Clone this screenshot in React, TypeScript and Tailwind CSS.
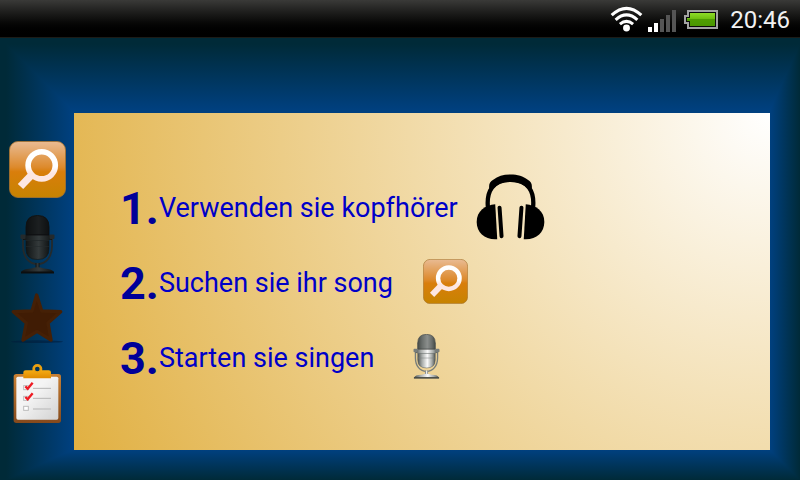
import { useId } from "react";

function WifiIcon() {
  return (
    <svg viewBox="30 19 98 79" className="h-[26px] w-[33px]" fill="none" stroke="#fff" strokeWidth="9.5" aria-hidden="true">
      <path d="M34 47 Q79 5 124 47" />
      <path d="M46 61 Q79 31 112 61" />
      <path d="M59 74 Q79 58 99 74" />
      <circle cx="79" cy="86" r="10.5" fill="#fff" stroke="none" />
    </svg>
  );
}

function SignalIcon() {
  return (
    <svg viewBox="0 0 28 22" className="h-[22px] w-7" aria-hidden="true">
      <rect x="0" y="17" width="4" height="5" fill="#fff" />
      <rect x="6" y="13" width="4" height="9" fill="#fff" />
      <rect x="12" y="9" width="4" height="13" fill="#555" />
      <rect x="18" y="5" width="4" height="17" fill="#555" />
      <rect x="24" y="0" width="4" height="22" fill="#555" />
    </svg>
  );
}

function BatteryIcon() {
  const id = useId();
  return (
    <svg viewBox="0 0 34 19" className="h-[19px] w-[34px]" aria-hidden="true">
      <defs>
        <linearGradient id={id} x1="0" y1="0" x2="0" y2="1">
          <stop offset="0" stopColor="#8fdc28" />
          <stop offset="0.45" stopColor="#6fbf10" />
          <stop offset="0.5" stopColor="#4f9e02" />
          <stop offset="1" stopColor="#4a9600" />
        </linearGradient>
      </defs>
      <path d="M3 0H34V19H3V14H0V5H3Z" fill="#a3a3a3" />
      <path d="M5 2H32V17H5V12H2V7H5Z" fill="#0a0a0a" />
      <path d="M6 3H31V16H6V11H3V8H6Z" fill={`url(#${id})`} />
    </svg>
  );
}

function SearchIcon({ className }: { className: string }) {
  const id = useId();
  return (
    <svg viewBox="0 0 57 57" className={className} aria-hidden="true">
      <defs>
        <linearGradient id={`${id}-tile`} x1="0" y1="0" x2="0" y2="1">
          <stop offset="0" stopColor="#e9bb93" />
          <stop offset="0.46" stopColor="#dd8a2c" />
          <stop offset="0.54" stopColor="#d97e0c" />
          <stop offset="1" stopColor="#c68300" />
        </linearGradient>
        <linearGradient id={`${id}-glass`} gradientUnits="userSpaceOnUse" x1="0" y1="8" x2="0" y2="48">
          <stop offset="0.45" stopColor="#fff" />
          <stop offset="0.6" stopColor="#fde6e2" />
        </linearGradient>
      </defs>
      <rect x="0.5" y="0.5" width="56" height="56" rx="8.5" fill={`url(#${id}-tile)`} stroke="#a87430" strokeWidth="0.8" />
      <g fill="none" stroke={`url(#${id}-glass)`}>
        <path d="M24 32.5 11.5 45.5" strokeWidth="7.5" />
        <circle cx="32.7" cy="24.3" r="13.6" strokeWidth="5.6" />
      </g>
    </svg>
  );
}

const micTones = {
  dark: { shine: "#343a3b", mid: "#202526", edge: "#111516", arm: "#242a2c", mesh: "#0c0e0f" },
  silver: { shine: "#fafafa", mid: "#a8acaa", edge: "#4d5250", arm: "#777d7b", mesh: "#3f4442" },
};

function MicIcon({ tone, className }: { tone: keyof typeof micTones; className: string }) {
  const id = useId();
  const c = micTones[tone];
  return (
    <svg viewBox="0 0 35 59" className={className} aria-hidden="true">
      <defs>
        <linearGradient id={`${id}-body`}>
          <stop offset="0" stopColor={c.edge} />
          <stop offset="0.25" stopColor={c.mid} />
          <stop offset="0.55" stopColor={c.shine} />
          <stop offset="0.8" stopColor={c.mid} />
          <stop offset="1" stopColor={c.edge} />
        </linearGradient>
        <pattern id={`${id}-mesh`} width="2" height="2" patternUnits="userSpaceOnUse">
          <path d="M0 0 2 2M2 0 0 2" stroke={c.mesh} strokeWidth="0.6" />
        </pattern>
      </defs>
      <path d="M3 24V31C3 42 9 49 17.5 49S32 42 32 31V24" fill="none" stroke={c.arm} strokeWidth="1.8" />
      <rect x="15.5" y="48" width="4" height="7" fill={`url(#${id}-body)`} />
      <path d="M6 20V12Q6 0.5 17.5 0.5T29 12V20Z" fill={`url(#${id}-body)`} stroke={c.edge} />
      <path d="M6 20V12Q6 0.5 17.5 0.5T29 12V20Z" fill={`url(#${id}-mesh)`} />
      <path d="M6 25H29V34Q29 44.5 17.5 44.5T6 34Z" fill={`url(#${id}-body)`} stroke={c.edge} strokeWidth="0.6" />
      <rect x="3" y="20" width="29" height="5" fill={`url(#${id}-body)`} />
      <path d="M6 20H29" stroke={c.mesh} strokeWidth="0.8" />
      <path d="M6 25.5H29M6 31.5H29" stroke={c.arm} strokeWidth="0.6" />
      <rect x="0.5" y="19.5" width="5" height="4.5" rx="1" fill={c.arm} />
      <rect x="29.5" y="19.5" width="5" height="4.5" rx="1" fill={c.arm} />
      <path d="M1.5 57Q2 54 11 53.5Q17.5 51 24 53.5Q33 54 33.5 57Z" fill={`url(#${id}-body)`} />
      <path d="M1 56.5H34V58.5H1Z" fill={c.mesh} />
    </svg>
  );
}

function StarIcon() {
  return (
    <svg viewBox="36 34 156 162" className="h-[54px] w-[52px]" aria-hidden="true">
      <ellipse cx="114" cy="183" rx="78" ry="4" fill="#001d3a" opacity="0.6" />
      <path
        d="M113 43 128 91 185 93 147 127 156 178 114 152 72 178 82 127 43 93 99 91Z"
        fill="#401c04"
        stroke="#452006"
        strokeWidth="10"
        strokeLinejoin="round"
      />
    </svg>
  );
}

function ClipboardIcon() {
  const id = useId();
  return (
    <svg viewBox="36 27 150 180" className="h-[60px] w-[50px]" aria-hidden="true">
      <defs>
        <linearGradient id={`${id}-board`} x1="0" y1="0" x2="0" y2="1">
          <stop offset="0" stopColor="#c98033" />
          <stop offset="1" stopColor="#84491c" />
        </linearGradient>
        <linearGradient id={`${id}-paper`} x1="0" y1="0" x2="1" y2="1">
          <stop offset="0.4" stopColor="#f4f4f4" />
          <stop offset="1" stopColor="#d2d2d2" />
        </linearGradient>
        <linearGradient id={`${id}-clip`} x1="0" y1="0" x2="0" y2="1">
          <stop offset="0" stopColor="#f5ab12" />
          <stop offset="1" stopColor="#df8a00" />
        </linearGradient>
      </defs>
      <rect x="41" y="57" width="142" height="147" rx="8" fill={`url(#${id}-board)`} />
      <rect x="49" y="65" width="126" height="129" rx="5" fill={`url(#${id}-paper)`} />
      <circle cx="112" cy="42" r="11" fill="none" stroke="#eaa010" strokeWidth="8" />
      <path d="M70 70V52Q70 46 77 46H100Q104 53 112 53T124 46H146Q153 46 153 52V70Z" fill={`url(#${id}-clip)`} />
      <path d="M99 100H153M99 130H153" stroke="#b5b5b5" strokeWidth="3" />
      <path d="M99 162H153" stroke="#c8c8c8" strokeWidth="5" />
      <g fill="#fff" stroke="#bcbcbc" strokeWidth="3">
        <rect x="71" y="92" width="14" height="12" />
        <rect x="71" y="124" width="14" height="12" />
        <rect x="71" y="154" width="14" height="12" />
      </g>
      <path d="M76 94 83 101 98 83M76 126 83 133 98 115" fill="none" stroke="#ee1c24" strokeWidth="7" />
    </svg>
  );
}

function HeadphonesIcon() {
  return (
    <svg viewBox="38 24 208 204" className="h-[68px] w-[69px]" aria-hidden="true">
      <path d="M96 118C66 121 40 138 40 171C40 203 66 226 102 223Z" />
      <path d="M188 118C218 121 244 138 244 171C244 203 218 226 182 223Z" />
      <path d="M74 128C69 80 88 44 142 44S215 80 210 128" fill="none" stroke="#000" strokeWidth="13" />
      <path d="M78 70C76 56 80 50 90 44C104 33 120 28 142 28S180 33 194 44C204 50 208 56 206 70L196 72C180 56 164 50 142 50S104 56 88 72Z" />
      <path d="M109 128 115 214M175 128 169 214" stroke="#000" strokeWidth="12" strokeLinecap="round" />
    </svg>
  );
}

const navItems = [
  { label: "Suchen", icon: <SearchIcon className="size-[57px]" /> },
  { label: "Singen", icon: <MicIcon tone="dark" className="h-[59px] w-[35px]" /> },
  { label: "Favoriten", icon: <StarIcon /> },
  { label: "Liste", icon: <ClipboardIcon /> },
];

const steps = [
  { text: "Verwenden sie kopfhörer", icon: <HeadphonesIcon /> },
  { text: "Suchen sie ihr song", icon: <SearchIcon className="size-[45px]" /> },
  { text: "Starten sie singen", icon: <MicIcon tone="silver" className="h-[45px] w-[27px]" /> },
];

export default function App() {
  return (
    <div className="flex min-h-screen flex-col font-[Roboto,sans-serif]">
      <header className="flex h-[38px] items-center justify-end border-b border-[#1c1c18] bg-linear-to-b from-[#3a3a38] to-black pr-[10px] text-[#f2f2f2]">
        <WifiIcon />
        <span className="ml-[5px] flex pt-1">
          <SignalIcon />
        </span>
        <span className="mr-3 ml-2 flex pt-0.5">
          <BatteryIcon />
        </span>
        <time className="pt-0.5 text-2xl">20:46</time>
      </header>

      {/* four edge fades, darken keeps the mitred corners */}
      <div className="flex flex-1 bg-[linear-gradient(to_right,#002a38_6px,#00407f_72px),linear-gradient(to_left,#002a38,#00407f_30px),linear-gradient(to_bottom,#002a38_6px,#00407f_72px),linear-gradient(to_top,#002a38,#00407f_30px)] pt-[75px] pr-[30px] pb-[30px] bg-blend-darken">
        <nav className="flex w-[74px] shrink-0 flex-col justify-center">
          {navItems.map((item) => (
            <button
              key={item.label}
              type="button"
              aria-label={item.label}
              className="flex h-[75px] items-center justify-center"
            >
              {item.icon}
            </button>
          ))}
        </nav>

        <main className="flex flex-1 flex-col justify-center bg-[radial-gradient(circle_farthest-corner_at_top_right,#fff,#e1b042)] pl-[46px]">
          <ol>
            {steps.map((step, i) => (
              <li key={step.text} className="flex h-[75px] items-center">
                <span className="pt-1 text-[45px] font-bold text-[#000099]">{i + 1}.</span>
                <span className="pt-1 text-[27px] text-[#0000c8]">{step.text}</span>
                <span className="ml-[15px] flex w-[75px] justify-center">{step.icon}</span>
              </li>
            ))}
          </ol>
        </main>
      </div>
    </div>
  );
}
